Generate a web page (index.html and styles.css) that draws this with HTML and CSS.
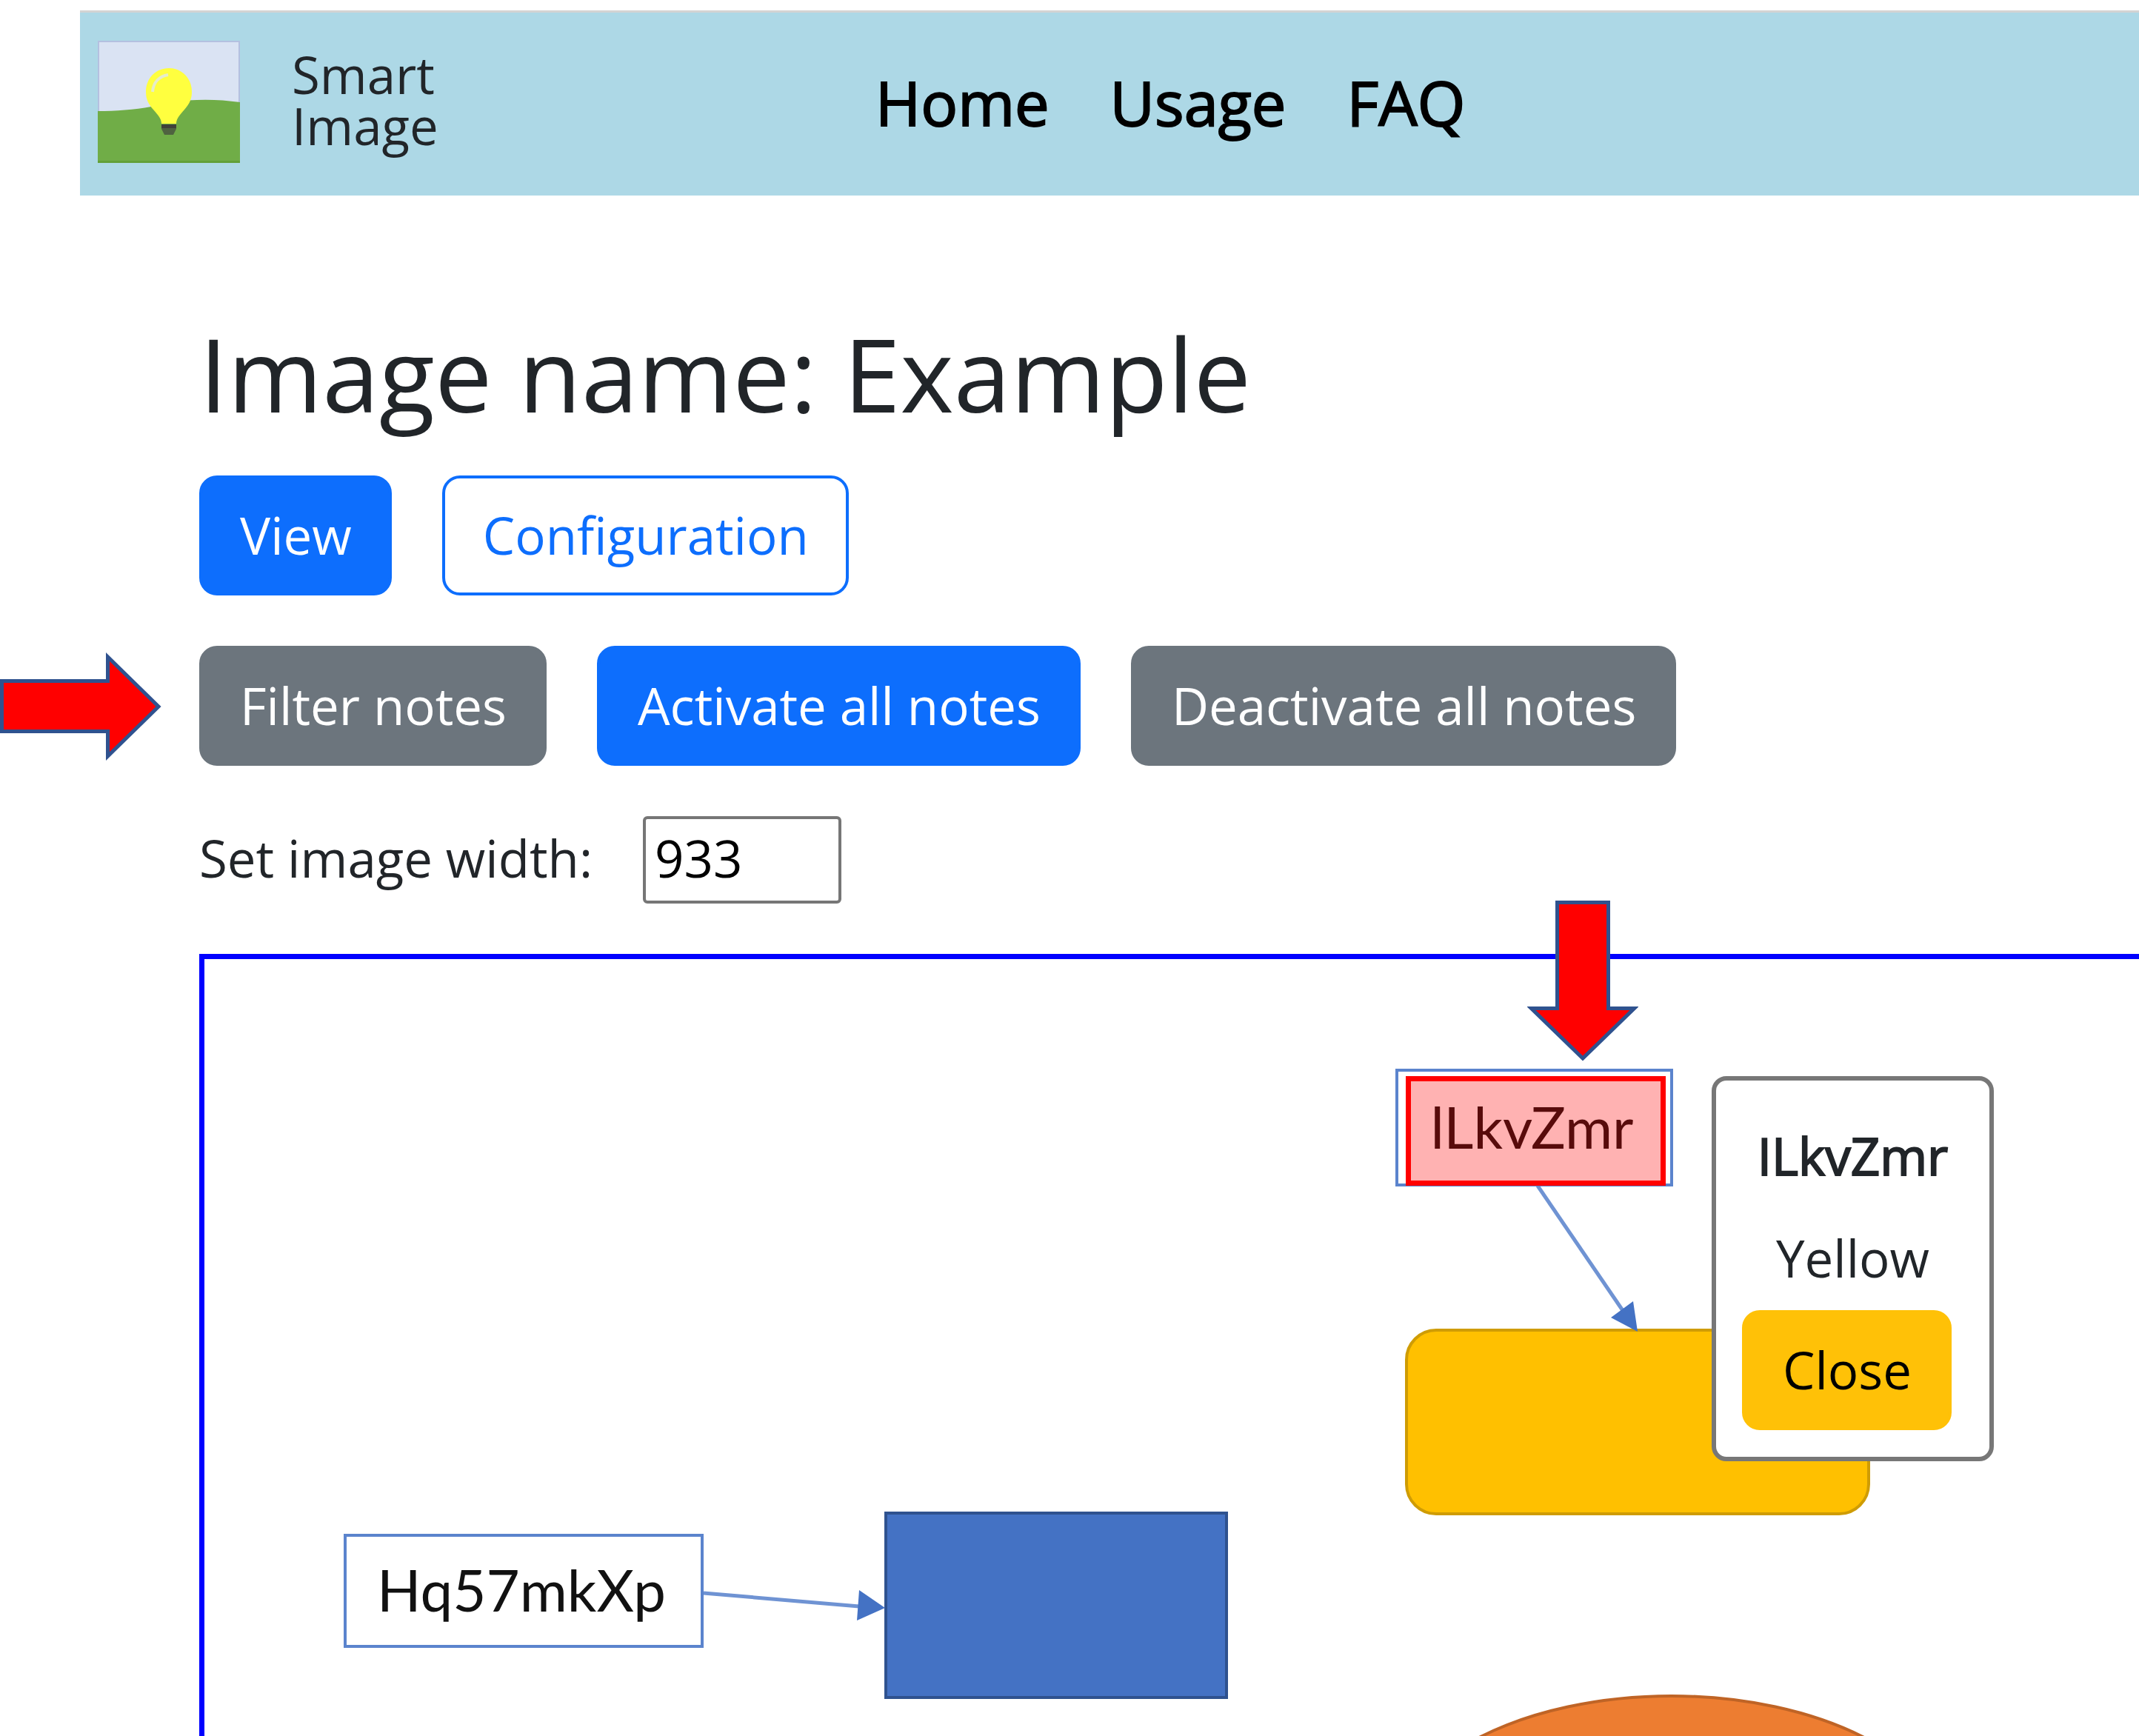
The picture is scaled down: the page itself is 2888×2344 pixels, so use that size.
FILE: index.html
```html
<!DOCTYPE html>
<html lang="en">
<head>
<meta charset="utf-8">
<title>Smart Image</title>
<link rel="stylesheet" href="styles.css">
</head>
<body>
<header class="site-header">
  <a class="brand" href="#">
    <svg class="brand-logo" viewBox="0 0 192 165" aria-hidden="true">
      <rect x="1" y="1" width="190" height="163" fill="#dae3f3" stroke="#b4c0e0" stroke-width="2"/>
      <path d="M0 95C24 95 50 93 72 89C110 79 150 77 192 83V165H0Z" fill="#70ad47"/>
      <path d="M0 163.500H192" stroke="#62a038" stroke-width="3"/>
      <path d="M96 37C78 37 65 51 65 69C65 80 69 86 75 93C81 100 86 105 86 112H106C106 105 111 100 117 93C123 86 127 80 127 69C127 51 114 37 96 37Z" fill="#ffff3f"/>
      <path d="M74 69C75 56 83 48 95 46" fill="none" stroke="#e6ecc9" stroke-width="4"/>
      <path d="M86 113H106V119L102 127H90L86 119Z" fill="#4f6340"/>
      <path d="M86 113H106V118H86Z" fill="#40423a"/>
    </svg>
    <span class="brand-name">Smart<br>Image</span>
  </a>
  <nav class="site-nav">
    <a href="#">Home</a>
    <a href="#">Usage</a>
    <a href="#">FAQ</a>
  </nav>
</header>

<main class="page">
  <h1 class="page-title">Image name: Example</h1>
  <div class="stack">
    <div class="row">
      <button class="btn btn-primary" type="button">View</button>
      <button class="btn btn-outline" type="button">Configuration</button>
    </div>
    <div class="row">
      <button class="btn btn-secondary" type="button">Filter notes</button>
      <button class="btn btn-primary" type="button">Activate all notes</button>
      <button class="btn btn-secondary" type="button">Deactivate all notes</button>
      <svg class="pointer pointer-right" viewBox="0 0 218 148" aria-hidden="true">
        <path d="M2.500 39.500H145.500V7L214 74L145.500 141V107.500H2.500Z"/>
      </svg>
    </div>
    <div class="row">
      <label class="field-label" for="image-width">Set image width:</label>
      <input class="field-input" id="image-width" type="text" inputmode="numeric" value="933">
    </div>
    <div class="viewer">
      <div class="canvas">
        <svg class="shapes" aria-hidden="true">
          <g fill="none" stroke="#6f93d3" stroke-width="5">
            <path d="M1800 306L1916 476"/>
            <path d="M674 856L884 874"/>
          </g>
          <rect x="1623" y="501" width="624" height="248" rx="40" fill="#ffc000" stroke="#cf9c04" stroke-width="4"/>
          <rect x="920" y="748" width="460" height="249" fill="#4472c4" stroke="#2f528f" stroke-width="4"/>
          <ellipse cx="1981" cy="1202" rx="380" ry="207" fill="#ed7d31" stroke="#bf6426" stroke-width="4"/>
          <path d="M1935 503L1929 462L1899 484ZM919 876L884 852L881 893Z" fill="#4472c4"/>
        </svg>
        <div class="node node-first">lLkvZmr</div>
        <div class="node node-second">Hq57mkXp</div>
        <div class="note-area"></div>
        <div class="note" role="dialog" aria-labelledby="note-title">
          <strong class="note-title" id="note-title">ILkvZmr</strong>
          <p class="note-text">Yellow</p>
          <button class="btn btn-warning" type="button">Close</button>
        </div>
      </div>
      <svg class="pointer pointer-down" viewBox="0 0 150 218" aria-hidden="true">
        <path d="M40.500 2.500H109.500V145.500H144.500L75 213L5.500 145.500H40.500Z"/>
      </svg>
    </div>
  </div>
</main>
</body>
</html>
```
FILE: styles.css
```css
* {
  box-sizing: border-box;
}

body {
  display: flex;
  flex-direction: column;
  min-height: 100vh;
  margin: 0;
  background: #fff;
  color: #212529;
  font-family: "Open Sans", "Noto Sans", sans-serif;
  font-size: 69px;
  line-height: 102px;
}

.site-header {
  display: flex;
  align-items: center;
  height: 250px;
  margin: 14px 0 0 108px;
  padding: 0 0 6px 24px;
  border-top: 3px solid #d3d3d3;
  background: #add8e6;
}

.brand {
  display: flex;
  align-items: center;
  flex: 0 0 1050px;
  gap: 70px;
  color: inherit;
  text-decoration: none;
}

.brand-logo {
  width: 192px;
  height: 165px;
}

.brand-name {
  padding-bottom: 6px;
  line-height: 69px;
}

.site-nav {
  display: flex;
  gap: 82px;
  font-size: 83px;
}

.site-nav a {
  color: #000;
  text-decoration: none;
  -webkit-text-stroke: 2px #000;
}

.page {
  display: flex;
  flex: 1;
  flex-direction: column;
  padding: 156px 0 0 269px;
}

.page-title {
  margin: 0 0 56px;
  font-size: 138px;
  font-weight: 400;
  line-height: 166px;
}

.stack {
  display: flex;
  flex: 1;
  flex-direction: column;
  gap: 68px;
}

.row {
  position: relative;
  display: flex;
  align-items: center;
  gap: 68px;
}

.btn {
  padding: 25px 50px 27px 51px;
  border: 4px solid transparent;
  border-radius: 24px;
  font: inherit;
  color: #fff;
}

.btn-primary {
  border-color: #0d6efd;
  background: #0d6efd;
}

.btn-secondary {
  border-color: #6c757d;
  background: #6c757d;
}

.btn-outline {
  border-color: #0d6efd;
  background: #fff;
  color: #0d6efd;
}

.btn-warning {
  border-color: #ffc107;
  background: #ffc107;
  color: #000;
}

.field-label {
  padding-bottom: 6px;
}

.field-input {
  width: 268px;
  height: 118px;
  padding: 0 12px 6px;
  border: 4px solid #767676;
  border-radius: 6px;
  background: #fff;
  font: inherit;
  color: #000;
}

.pointer {
  position: absolute;
  fill: #f00;
  stroke: #2f528f;
  stroke-width: 5;
}

.pointer-right {
  top: 8px;
  left: -269px;
  width: 218px;
  height: 148px;
}

.pointer-down {
  top: -72px;
  left: 1793px;
  width: 150px;
  height: 218px;
}

.viewer {
  position: relative;
  display: flex;
  flex: 1;
  min-height: 1050px;
}

.canvas {
  position: relative;
  flex: 1;
  overflow: hidden;
  border: solid #00f;
  border-width: 7px 0 0 7px;
}

.shapes {
  position: absolute;
  inset: 0;
  width: 100%;
  height: 100%;
}

.node {
  position: absolute;
  display: flex;
  align-items: center;
  justify-content: center;
  padding: 0 6px 4px 0;
  border: 4px solid #5b84cd;
  background: #fff;
  color: #111;
  font-family: Lato, sans-serif;
  font-size: 78px;
}

.node-first {
  top: 148px;
  left: 1608px;
  width: 375px;
  height: 159px;
}

.node-second {
  top: 776px;
  left: 188px;
  width: 486px;
  height: 154px;
}

.note-area {
  position: absolute;
  top: 158px;
  left: 1622px;
  width: 351px;
  height: 148px;
  border: 7px solid #f00;
  background: rgba(255, 0, 0, 0.3);
}

.note {
  position: absolute;
  top: 158px;
  left: 2035px;
  display: flex;
  flex-direction: column;
  align-items: center;
  width: 381px;
  padding: 50px 34px 36px;
  border: 6px solid #777;
  border-radius: 20px;
  background: #fff;
}

.note-title {
  margin-bottom: 36px;
  font-weight: 400;
  -webkit-text-stroke: 2px #212529;
}

.note-text {
  margin: 0 0 20px;
}

.note .btn {
  margin-right: 16px;
}
```
